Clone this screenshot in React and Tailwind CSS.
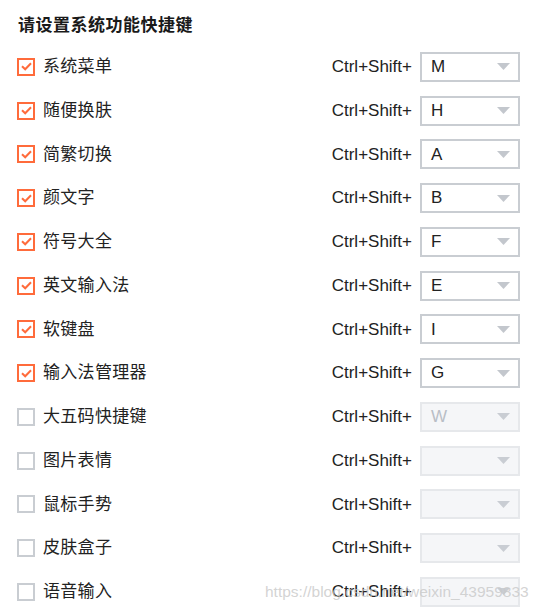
const rows = [
  { label: "系统菜单", key: "M", on: true },
  { label: "随便换肤", key: "H", on: true },
  { label: "简繁切换", key: "A", on: true },
  { label: "颜文字", key: "B", on: true },
  { label: "符号大全", key: "F", on: true },
  { label: "英文输入法", key: "E", on: true },
  { label: "软键盘", key: "I", on: true },
  { label: "输入法管理器", key: "G", on: true },
  { label: "大五码快捷键", key: "W", on: false },
  { label: "图片表情", key: "", on: false },
  { label: "鼠标手势", key: "", on: false },
  { label: "皮肤盒子", key: "", on: false },
  { label: "语音输入", key: "", on: false },
];

function CheckBox({ on }) {
  if (on) {
    return (
      <span className="w-[18px] h-[18px] border-2 border-[#ff6b3b] bg-white flex items-center justify-center shrink-0">
        <svg width="11" height="9" viewBox="0 0 11 9">
          <path d="M1 4.2 L4.2 7.3 L10 1.2" fill="none" stroke="#ff6b3b" strokeWidth="2" />
        </svg>
      </span>
    );
  }
  return <span className="w-[18px] h-[18px] border-2 border-[#c9cdd2] bg-white shrink-0" />;
}

function KeySelect({ value, on }) {
  return (
    <div
      className={`w-[100px] h-[30px] border-2 flex items-center justify-between pl-[9px] pr-[8px] ${
        on ? "border-[#c9cdd2] bg-white text-[#222]" : "border-[#e6e8eb] bg-[#f5f6f8] text-[#b9bec6]"
      }`}
    >
      <span>{value}</span>
      <svg width="13" height="7" viewBox="0 0 13 7">
        <path d="M0 0 L13 0 L6.5 7 Z" fill={on ? "#c3c7cd" : "#c9cdd3"} />
      </svg>
    </div>
  );
}

export default function App() {
  return (
    <div
      className="relative w-[545px] h-[610px] bg-white overflow-hidden text-[#222] text-[17px]"
      style={{ fontFamily: '"Liberation Sans", "Noto Sans CJK SC", sans-serif' }}
    >
      <div className="pl-[17px] pr-[25px]">
        <h1 className="h-[45px] flex items-center pt-[6px] pl-px font-bold text-[#1a1a1a] text-[17px] tracking-[0.5px]">
          请设置系统功能快捷键
        </h1>
        {rows.map((r) => (
          <div key={r.label} className="h-[43.75px] flex items-center">
            <CheckBox on={r.on} />
            <span className="ml-[8px] flex-1 tracking-[0.3px]">{r.label}</span>
            <span className="mr-[8px]">Ctrl+Shift+</span>
            <KeySelect value={r.key} on={r.on} />
          </div>
        ))}
      </div>
      <div className="absolute left-[265px] top-[580px] text-[15.5px] text-[#c8c8c8]/80 pointer-events-none">
        https://blog.csdn.net/weixin_43959833
      </div>
    </div>
  );
}
